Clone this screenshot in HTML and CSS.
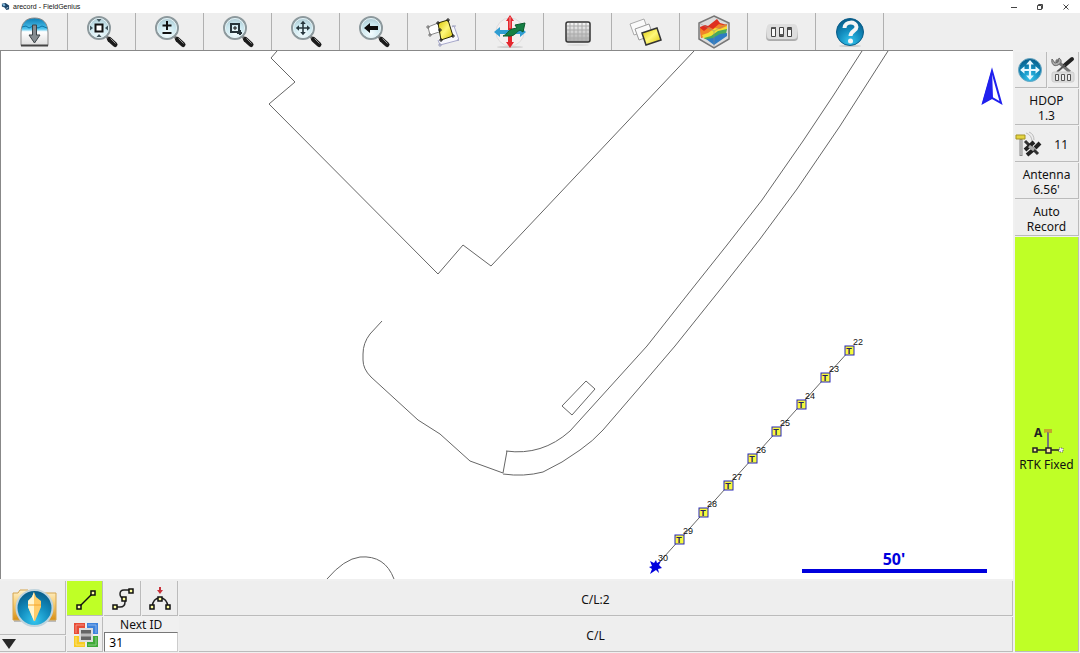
FILE: index.html
```
<!DOCTYPE html>
<html lang="en">
<head>
    <meta charset="UTF-8">
    <meta name="viewport" content="width=device-width, initial-scale=1.0">
    <title>arecord - FieldGenius</title>
    <link rel="stylesheet" href="styles.css">
</head>
<body>
    <!-- Shared gradients and symbols -->
    <svg class="defs" aria-hidden="true">
        <defs>
            <radialGradient id="glass" cx="50%" cy="75%" r="75%">
                <stop offset="0" stop-color="#f4fdff"/>
                <stop offset="0.6" stop-color="#c8e6ee"/>
                <stop offset="1" stop-color="#a3bfc8"/>
            </radialGradient>
            <radialGradient id="blueBall" cx="50%" cy="85%" r="85%">
                <stop offset="0" stop-color="#35c5ee"/>
                <stop offset="0.5" stop-color="#128cbe"/>
                <stop offset="1" stop-color="#075985"/>
            </radialGradient>
            <linearGradient id="metal" x1="0" y1="0" x2="0" y2="1">
                <stop offset="0" stop-color="#fafafa"/>
                <stop offset="1" stop-color="#aaaaaa"/>
            </linearGradient>
            <linearGradient id="dome" x1="0" y1="0" x2="0" y2="1">
                <stop offset="0" stop-color="#0b7db5"/>
                <stop offset="0.4" stop-color="#4ec4ee"/>
                <stop offset="0.5" stop-color="#ffffff"/>
                <stop offset="1" stop-color="#dedede"/>
            </linearGradient>
            <linearGradient id="gold" x1="0" y1="0" x2="0" y2="1">
                <stop offset="0" stop-color="#fff3cf"/>
                <stop offset="0.45" stop-color="#f7ce75"/>
                <stop offset="1" stop-color="#d98f14"/>
            </linearGradient>
            <linearGradient id="yellow" x1="0" y1="0" x2="1" y2="1">
                <stop offset="0" stop-color="#d9c400"/>
                <stop offset="0.5" stop-color="#fff87a"/>
                <stop offset="1" stop-color="#d8c200"/>
            </linearGradient>
        </defs>
        <symbol id="lens" viewBox="0 0 34 34">
            <path d="M21 21l4 4" stroke="#777" stroke-width="3"/>
            <path d="M24.500 24.500l5.500 5" stroke="#1b1b1b" stroke-width="5" stroke-linecap="round"/>
            <path d="M25.500 23.500l5 5" stroke="#999" stroke-width="1"/>
            <circle cx="14" cy="13" r="11" fill="url(#glass)" stroke="#8d999d" stroke-width="2"/>
            <circle cx="14" cy="13" r="9.500" fill="none" stroke="#e6f3f6"/>
        </symbol>
        <symbol id="fourway" viewBox="0 0 20 20">
            <path d="M10 1l3.500 4h-2.500v4h4v-2.500l4 3.500-4 3.500v-2.500h-4v4h2.500l-3.500 4-3.500-4h2.500v-4h-4v2.500l-4-3.500 4-3.500v2.500h4v-4h-2.500z"/>
        </symbol>
    </svg>

    <div class="app">
        <header class="titlebar">
            <svg class="app-icon" viewBox="0 0 10 10"><path d="M1 2l4-1 4 3v4l-3 1-2-3-3-1z" fill="#1b4468"/><path d="M1 2l3 0 1 2-2 1z" fill="#7fb6da"/><path d="M6 7l2-1" stroke="#cfe3ef"/></svg>
            <h1 class="app-title">arecord - FieldGenius</h1>
            <div class="window-controls">
                <button aria-label="Minimize"><svg viewBox="0 0 8 8"><path d="M1 4.500h6"/></svg></button>
                <button aria-label="Restore"><svg viewBox="0 0 8 8"><path d="M1.500 2.500h4v4h-4zM2.500 2.500v-1h4v4h-1"/></svg></button>
                <button aria-label="Close"><svg viewBox="0 0 8 8"><path d="M1.500 1.500l5 5M6.500 1.500l-5 5"/></svg></button>
            </div>
        </header>

        <nav class="toolbar" aria-label="Map tools">
            <button aria-label="Main menu">
                <svg viewBox="0 0 34 34">
                    <path d="M4 30.500V18C4 8 9 3 17.500 3S31 8 31 18v12.500z" fill="url(#dome)" stroke="#888"/>
                    <path d="M4 30.500h27" stroke="#444" stroke-width="2"/>
                    <path d="M5 12l4-1 3 2 4-2 5 2 4-2 5 2" fill="none" stroke="#0c74a6"/>
                    <path d="M15.500 10h4v10h3.500l-5.500 8-5.500-8h3.500z" fill="#858c90" stroke="#3b4246"/>
                </svg>
            </button>
            <button aria-label="Zoom extents">
                <svg viewBox="0 0 34 34">
                    <use href="#lens"/>
                    <path d="M10.500 9.500h7v7h-7z" fill="#fff" stroke="#111" stroke-width="2"/>
                    <path d="M11.500 4h5L14 7zM11.500 22h5L14 19zM5 10.500v5L8 13zM23 10.500v5L20 13z" fill="#41565e"/>
                </svg>
            </button>
            <button aria-label="Zoom in and out">
                <svg viewBox="0 0 34 34">
                    <use href="#lens"/>
                    <path d="M14 6v9M9.500 10.500h9M9.500 18h9" stroke="#111" stroke-width="2"/>
                </svg>
            </button>
            <button aria-label="Zoom window">
                <svg viewBox="0 0 34 34">
                    <use href="#lens"/>
                    <path d="M10 9h8v8h-8zM16 18h5M19 15v5" fill="none" stroke="#26343a" stroke-width="2"/>
                    <path d="M14 11v4M12 13h4" stroke="#111"/>
                </svg>
            </button>
            <button aria-label="Pan">
                <svg viewBox="0 0 34 34">
                    <use href="#lens"/>
                    <use href="#fourway" x="6" y="5" width="16" height="16" fill="#27373e"/>
                </svg>
            </button>
            <button aria-label="Zoom previous">
                <svg viewBox="0 0 34 34">
                    <use href="#lens"/>
                    <path d="M7 13l6-5v3h8v4h-8v3z" fill="#0d0d0d"/>
                </svg>
            </button>
            <button aria-label="Draw figures">
                <svg viewBox="0 0 34 34">
                    <path d="M27 12l2-1 5 14-19 5-2-5" fill="#f7f7fc" stroke="#a7a8cb"/>
                    <path d="M3 12l10-4 4 8-12 4z" fill="#fff" stroke="#888"/>
                    <path d="M13 8l10-3 5 16-12 4z" fill="url(#yellow)" stroke="#2b2900"/>
                    <path d="M11 8h4M13 6v4M21 5h4M23 3v4M26 21h4M28 19v4M14 25h4M16 23v4M13 15h4M15 13v4" stroke="#222"/>
                    <path d="M1 12h4M3 10v4M3 20h4M5 18v4" stroke="#777"/>
                    <path d="M27 11h4M32 25h3M13 30h4M15 28v4" stroke="#9da0be"/>
                </svg>
            </button>
            <button aria-label="Rotate view">
                <svg viewBox="0 0 34 34">
                    <ellipse cx="17" cy="32" rx="13" ry="1" fill="#ccc"/>
                    <circle cx="17" cy="17" r="14" fill="#f4eeee" stroke="#ddd"/>
                    <path d="M17 0l4 6h-2v21h2l-4 6-4-6h2V6h-2z" fill="#e4262d"/>
                    <path d="M1 17l6-5v3h20v-3l6 5-6 5v-3H7v3z" fill="#2f9dd2"/>
                    <path d="M10 21c4-1 5-6 9-7l5-1-2-3 10-2-2 9-3-2c-4 2-5 6-10 6z" fill="#168044" stroke="#0b5b2d"/>
                    <path d="M17 2v11" stroke="#f7a2a2"/>
                </svg>
            </button>
            <button aria-label="Keypad grid">
                <svg viewBox="0 0 34 34">
                    <ellipse cx="17" cy="30" rx="11" ry="1" fill="#ddd"/>
                    <rect x="5" y="7" width="24" height="20" rx="2" fill="url(#metal)" stroke="#333" stroke-width="1.500"/>
                    <path d="M9 8v18M13 8v18M17 8v18M21 8v18M25 8v18M6 11h22M6 15h22M6 19h22M6 23h22" stroke="#aaa"/>
                </svg>
            </button>
            <button aria-label="Layers">
                <svg viewBox="0 0 34 34">
                    <path d="M1 9l14-5 4 11-14 5z" fill="#fafafa" stroke="#aaa"/>
                    <path d="M6 14l14-5 4 11-14 5z" fill="#fafafa" stroke="#999"/>
                    <path d="M13 18l15-5 4 12-15 5z" fill="url(#yellow)" stroke="#333" stroke-width="1.500"/>
                </svg>
            </button>
            <button aria-label="Surfaces">
                <svg viewBox="0 0 34 34">
                    <path d="M17 1l15 7v16l-15 9-15-9V8z" fill="#dcdcdc" stroke="#777" stroke-width="1.500"/>
                    <path d="M3 12l5-2 3 1 9-7 3 4 7 2-8 6-7 2-11 5z" fill="#df2e1e"/>
                    <path d="M3 13l4 3 5-4 4 2 6-5 4 1 4-1v5l-11 5-8 1-7 3z" fill="#f18428"/>
                    <path d="M5 20l6-2 7-5 5 1 7-3v4l-9 5-7 1-7 3z" fill="#f3df35"/>
                    <path d="M7 23l7-2 7-5 9-2-1 5-8 4-7 2-6-1z" fill="#49ab5b"/>
                    <path d="M9 24l7-1 7-4 7-1v3l-13 9z" fill="#2f7cc4"/>
                    <path d="M2 8l15 8 15-8M17 16v16" fill="none" stroke="#888" opacity="0.500"/>
                </svg>
            </button>
            <button aria-label="Settings switches">
                <svg viewBox="0 0 34 34">
                    <rect x="1" y="9" width="32" height="17" rx="4" fill="url(#metal)"/>
                    <rect x="2" y="9" width="30" height="15" rx="3" fill="#dedede"/>
                    <path d="M6.500 12.500h4v9h-4zM14.500 12.500h4v9h-4zM22.500 12.500h4v9h-4z" fill="#f8f8f8" stroke="#444"/>
                    <path d="M7 13h4M15 20h4M23 14h4" stroke="#555" stroke-width="2"/>
                </svg>
            </button>
            <button aria-label="Help">
                <svg viewBox="0 0 34 34">
                    <ellipse cx="17" cy="31" rx="11" ry="1" fill="#ccc"/>
                    <circle cx="17" cy="17" r="13.500" fill="url(#blueBall)" stroke="#0a5e8a"/>
                    <path d="M11.500 13c0-7 12-7 12-1 0 4-6 4-6 9" fill="none" stroke="#f5f5f5" stroke-width="4"/>
                    <circle cx="17.500" cy="26" r="2.500" fill="#f5f5f5"/>
                </svg>
            </button>
        </nav>

        <div class="workspace">
            <main class="work-column">
                <svg class="map" viewBox="1 51 1012 528" preserveAspectRatio="xMidYMid slice" role="img" aria-label="Survey map">
                    <!-- Existing linework -->
                    <g class="linework">
                        <path d="M277 51l-6 7 24 24-26 22 169 170 25-29 28 21L694 51"/>
                        <path d="M382 321l-12 13q-7 9-7 20v6q0 9 8 17l47 43 22 14 30 27 33 12 4-22"/>
                        <path d="M862 51l-29 45-30 45-41 59-35 45-39 49-41 52-77 85q-28 25-64 20"/>
                        <path d="M888 51l-48 75-43 63-37 50-37 47-48 60-35 41-37 43q-10 11-23 20l-18 12-19 10q-19 5-40 2"/>
                        <path d="M586 381l9 8-23 26-10-9z"/>
                        <path d="M327 579q17-20 33-22 25-2 34 22"/>
                        <path d="M849 351L655 567"/>
                    </g>
                    <!-- Shot points -->
                    <g class="points">
                        <rect x="845" y="346" width="9" height="9"/><text x="849" y="354">T</text>
                        <rect x="821" y="373" width="9" height="9"/><text x="825" y="381">T</text>
                        <rect x="797" y="400" width="9" height="9"/><text x="801" y="408">T</text>
                        <rect x="772" y="427" width="9" height="9"/><text x="776" y="435">T</text>
                        <rect x="748" y="454" width="9" height="9"/><text x="752" y="462">T</text>
                        <rect x="724" y="481" width="9" height="9"/><text x="728" y="489">T</text>
                        <rect x="699" y="508" width="9" height="9"/><text x="703" y="516">T</text>
                        <rect x="675" y="535" width="9" height="9"/><text x="679" y="543">T</text>
                    </g>
                    <path d="M650 561l4 2 2-3 1 3 4-2-2 4 3 3-4 1 1 4-3-3-6 4 2-5-3-2 3-1z" fill="#0000dd"/>
                    <g class="point-ids">
                        <text x="853" y="345">22</text>
                        <text x="829" y="372">23</text>
                        <text x="805" y="399">24</text>
                        <text x="780" y="426">25</text>
                        <text x="756" y="453">26</text>
                        <text x="732" y="480">27</text>
                        <text x="707" y="507">28</text>
                        <text x="683" y="534">29</text>
                        <text x="658" y="561">30</text>
                    </g>
                    <!-- North arrow and scale bar -->
                    <path d="M992 71l-9 32 9-5 9 5z" fill="#fff" stroke="#2020ee" stroke-width="2"/>
                    <path d="M992 69l-10 35 11-6z" fill="#2020ee"/>
                    <rect x="802" y="569" width="185" height="4" fill="#0000dd"/>
                    <text class="scale" x="894" y="565">50'</text>
                </svg>

                <section class="bottom-bar" aria-label="Figure controls">
                    <div class="measure-col">
                        <button class="measure" aria-label="Measure">
                            <svg viewBox="0 0 46 44">
                                <path d="M2 8h5l2-4h9l2 4h18l6 1v27H2z" fill="#888" opacity="0.500"/>
                                <path d="M1 7h5l2-3h8l2 3h26v27H1z" fill="url(#gold)" stroke="#d5a54f"/>
                                <circle cx="22.500" cy="22" r="18" fill="url(#blueBall)" stroke="#c0d4dd" stroke-width="2"/>
                                <path d="M22 6l2 5 5 4v6l-6 14h-1l-6-14v-6l4-4z" fill="#ffcc69"/>
                                <path d="M22 6l-2 5-4 4v6l6 14z" fill="#fff5cf"/>
                                <path d="M16 19h13" stroke="#f4a42c"/>
                            </svg>
                        </button>
                        <button class="expand" aria-label="More tools"><svg viewBox="0 0 14 10"><path d="M0 0h14L7 10z" fill="#282828"/></svg></button>
                    </div>
                    <div class="modes">
                        <button class="active" aria-label="Line mode">
                            <svg viewBox="0 0 28 28"><path d="M7 22L21 8" stroke="#111" stroke-width="1.500"/><path d="M5 20h4v4h-4zM19 6h4v4h-4z" fill="#ffffa0" stroke="#111" stroke-width="1.500"/></svg>
                        </button>
                        <button aria-label="Curve mode">
                            <svg viewBox="0 0 28 28"><path d="M6 22h5q5 0 5-5v-3q-5-1-5-5 0-4 4-4h7" fill="none" stroke="#222" stroke-width="1.500"/><path d="M4 20h4v4h-4zM13 12h4v4h-4zM20 4h4v4h-4z" fill="#ffffa0" stroke="#111" stroke-width="1.500"/></svg>
                        </button>
                        <button aria-label="Arc mode">
                            <svg viewBox="0 0 28 28"><path d="M6 22q1-9 8-9t8 9" fill="none" stroke="#222" stroke-width="1.500"/><path d="M4 20h4v4h-4zM12 12h4v4h-4zM20 20h4v4h-4z" fill="#ffffa0" stroke="#111" stroke-width="1.500"/><path d="M13 2h2v3h2l-3 4-3-4h2z" fill="#c8323b"/></svg>
                        </button>
                        <button aria-label="Display colours">
                            <svg viewBox="0 0 28 28">
                                <path d="M2 2h11v11H2z" fill="#e84b35"/><path d="M15 2h11v11H15z" fill="#3e83dc"/><path d="M2 15h11v11H2z" fill="#f8cc24"/><path d="M15 15h11v11H15z" fill="#3faa36"/>
                                <path d="M4 4h8M4 4v8M16 4h8M24 4v8M4 16v8M4 24h8M16 24h8M24 16v8" stroke="#fff" opacity="0.400"/>
                                <path d="M7 7h14v14H7z" fill="#ddd"/><path d="M9 9h10v10H9z" fill="#666"/><path d="M9 14h10" stroke="#bbb" stroke-width="3"/>
                            </svg>
                        </button>
                        <div class="next-id">
                            <label for="nextId">Next ID</label>
                            <input type="text" id="nextId" value="31">
                        </div>
                    </div>
                    <div class="figures">
                        <button>C/L:2</button>
                        <button>C/L</button>
                    </div>
                </section>
            </main>

            <aside class="sidebar" aria-label="Instrument status">
                <div class="icon-pair">
                    <button aria-label="Pan to position">
                        <svg viewBox="0 0 28 28"><circle cx="14" cy="14" r="11.500" fill="url(#blueBall)" stroke="#6aa9c4"/><use href="#fourway" x="3" y="3" width="22" height="22" fill="#e7f8ff"/></svg>
                    </button>
                    <button aria-label="Instrument settings">
                        <svg viewBox="0 0 28 28">
                            <path d="M7 4l14 12" stroke="#777" stroke-width="3"/><path d="M3 3c-1 5 2 8 6 6s4-5 1-7l-1 4-3 1z" fill="#aaa" stroke="#666"/>
                            <path d="M23 3l-7 6" stroke="#222" stroke-width="4" stroke-linecap="round"/><path d="M16 9l-8 7" stroke="#555" stroke-width="2"/>
                            <rect x="3" y="16" width="22" height="10" rx="2" fill="#ddd" stroke="#ccc"/><path d="M6.500 18.500h3v6h-3zM12.500 18.500h3v6h-3zM18.500 18.500h3v6h-3z" fill="#eee" stroke="#555"/>
                        </svg>
                    </button>
                </div>
                <button>HDOP<br>1.3</button>
                <button class="satellites">
                    <svg viewBox="0 0 28 28">
                        <path d="M6 8v17" stroke="#888" stroke-width="3"/><path d="M6 9v15" stroke="#ddd"/><path d="M1 4h9v4H1z" fill="#e4d440" stroke="#a49324"/>
                        <path d="M11 2q6 2 6 9M14 1q5 2 5 8" fill="none" stroke="#bbb"/>
                        <path d="M10 10l13 13" stroke="#333" stroke-width="3"/><path d="M20 17l5-5M12 24l6-5M10 19l9-8" stroke="#222" stroke-width="4"/><path d="M14 15l5 4" stroke="#aaa" stroke-width="3"/>
                    </svg>
                    <span>11</span>
                </button>
                <button>Antenna<br>6.56'</button>
                <button>Auto<br>Record</button>
                <button class="rtk">
                    <svg viewBox="0 0 34 32">
                        <path d="M18 6v18" stroke="#777" stroke-width="2"/><path d="M14 4h8v4h-3l-1-1-4 1z" fill="#c5a62c"/>
                        <path d="M5 25h26" stroke="#222" stroke-width="1.500"/>
                        <path d="M3 23h4v4H3zM16 23h5v5h-5z" fill="#f8e79e" stroke="#222" stroke-width="1.500"/><path d="M29 23h4v4h-4z" fill="#eee" stroke="#666" stroke-dasharray="1 1"/>
                        <text x="4" y="12">A</text>
                    </svg>
                    <span>RTK Fixed</span>
                </button>
            </aside>
        </div>
    </div>
</body>
</html>
```
FILE: styles.css
```
* {
    box-sizing: border-box;
}

body {
    margin: 0;
    background: #f0f0f0;
    color: #111;
    font-family: "Noto Sans", "Open Sans", sans-serif;
    font-size: 12px;
    line-height: 15px;
}

button {
    padding: 0;
    border: 0;
    background: #eee;
    color: inherit;
    font: inherit;
    cursor: pointer;
}

svg {
    display: block;
}

.defs {
    position: absolute;
    width: 0;
    height: 0;
}

.app {
    display: flex;
    flex-direction: column;
    height: 100vh;
}

/* Title bar */
.titlebar {
    display: flex;
    align-items: center;
    height: 13px;
    padding: 0 10px 0 1px;
    background: #fff;
}

.app-icon {
    width: 9px;
    height: 9px;
    margin-right: 3px;
}

.app-title {
    margin: 0;
    font-family: "Liberation Sans", sans-serif;
    font-size: 7px;
    font-weight: normal;
    line-height: 13px;
}

.window-controls {
    display: flex;
    gap: 18px;
    margin-left: auto;
}

.window-controls button {
    background: none;
}

.window-controls svg {
    width: 8px;
    height: 8px;
    fill: none;
    stroke: #444;
}

/* Toolbar */
.toolbar {
    display: flex;
    height: 37px;
    background: #eee;
}

.toolbar button {
    display: grid;
    place-items: center;
    width: 68px;
    border-right: 1px solid #b0b0b0;
}

.toolbar svg {
    width: 34px;
    height: 34px;
}

/* Workspace */
.workspace {
    display: flex;
    flex: 1;
    min-height: 0;
}

.work-column {
    display: flex;
    flex: 1;
    flex-direction: column;
    min-width: 0;
}

.map {
    flex: 1;
    width: 100%;
    min-height: 0;
    border-top: 1px solid #888;
    border-left: 1px solid #888;
    background: #fff;
}

.linework {
    fill: none;
    stroke: #666;
    stroke-width: 1px;
}

.points rect {
    fill: #f8f83c;
    stroke: #2626b8;
    stroke-width: 1px;
}

.points text {
    fill: #222260;
    font-family: "Liberation Sans", sans-serif;
    font-size: 9px;
    font-weight: bold;
    text-anchor: middle;
}

.point-ids text {
    fill: #111;
    font-family: "Liberation Sans", sans-serif;
    font-size: 9px;
}

.scale {
    fill: #0000dd;
    font-size: 16px;
    font-weight: bold;
    text-anchor: middle;
}

/* Bottom bar */
.bottom-bar {
    display: grid;
    grid-template-columns: 66px 111px 1fr;
    gap: 1px;
    padding: 2px 0 1px;
}

.bottom-bar button,
.sidebar button {
    border-right: 1px solid #bbb;
    border-bottom: 1px solid #bbb;
}

.measure-col {
    display: flex;
    flex-direction: column;
    gap: 1px;
}

.measure {
    display: grid;
    flex: 1;
    place-items: center end;
}

.measure svg {
    width: 46px;
    height: 44px;
    margin-right: 7px;
}

.expand {
    height: 16px;
    padding-left: 2px;
}

.expand svg {
    width: 14px;
    height: 10px;
}

.modes {
    display: grid;
    grid-template-columns: repeat(3, 1fr);
    grid-template-rows: 35px 35px;
    gap: 1px;
}

.modes button {
    display: grid;
    place-items: center;
    padding: 2px 0 0 2px;
}

.modes svg {
    width: 28px;
    height: 28px;
}

.modes .active,
.sidebar .rtk {
    background: #bfff26;
}

.next-id {
    display: flex;
    flex-direction: column;
    grid-column: span 2;
    text-align: center;
}

.next-id input {
    width: 100%;
    min-height: 0;
    flex: 1;
    padding: 0 4px;
    border: 1px solid #ccc;
    border-top-color: #777;
    border-left-color: #777;
    background: #fff;
    font: inherit;
}

.figures {
    display: grid;
    grid-template-rows: 35px 35px;
    gap: 1px;
}

.figures button {
    padding-top: 2px;
}

/* Sidebar */
.sidebar {
    display: flex;
    flex-direction: column;
    gap: 1px;
    width: 67px;
    padding: 2px 1px 1px 2px;
}

.sidebar button {
    min-height: 36px;
    padding-top: 2px;
}

.icon-pair {
    display: grid;
    grid-template-columns: 1fr 1fr;
    gap: 1px;
}

.sidebar .icon-pair button {
    display: grid;
    place-items: center;
    padding: 0;
}

.icon-pair svg,
.satellites svg {
    width: 28px;
    height: 28px;
}

.satellites {
    display: flex;
    align-items: center;
    justify-content: space-between;
    padding-right: 10px;
}

.sidebar .rtk {
    display: flex;
    flex: 1;
    flex-direction: column;
    align-items: center;
    justify-content: center;
    padding-top: 8px;
    white-space: nowrap;
}

.rtk svg {
    width: 34px;
    height: 32px;
}

.rtk text {
    fill: #222;
    font-size: 12px;
    font-weight: bold;
}
```
